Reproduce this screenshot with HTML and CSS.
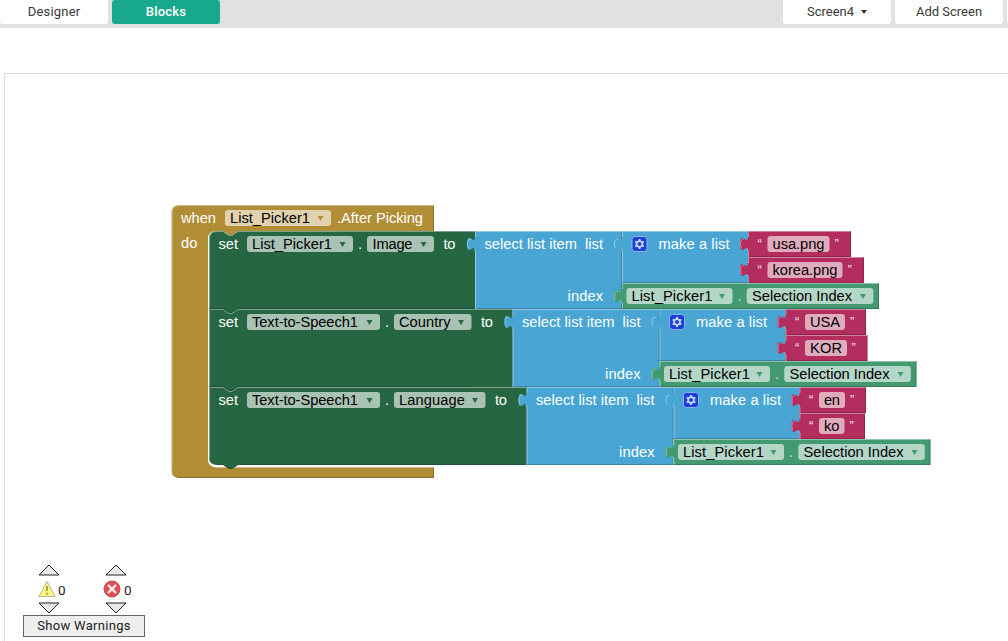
FILE: index.html
```html
<!DOCTYPE html>
<html lang="en">
<head>
<meta charset="utf-8">
<title>Blocks</title>
<link rel="stylesheet" href="styles.css">
</head>
<body>
<header class="toolbar">
  <nav class="group">
    <button class="tab">Designer</button>
    <button class="tab active">Blocks</button>
  </nav>
  <nav class="group screens">
    <button class="tab tight">Screen4<span class="caret"></span></button>
    <button class="tab tight">Add Screen</button>
    <button class="tab"></button>
  </nav>
</header>
<main class="workspace">
<svg class="canvas" viewBox="5 74 1003 567" width="1003" height="567">
  <defs>
    <path id="tab" d="M1.500 6H0c0 9-8-7-8 7s8-2 8 7h1.500z"/>
    <path id="tab-light" d="M-4 8.200q-3.500-.5-3.500 4.800q0 3 1 4.500M-1 17.500q1 1 1 2.500"/>
    <path id="arrow" d="M-3-2h6l-3 5z"/>
    <g id="gear">
      <rect class="gear-box" x="-7.500" y="-7.500" width="15" height="15" rx="3"/>
      <path class="gear-teeth" d="M0-5v10M-4.330-2.500l8.660 5M-4.330 2.500l8.660-5"/>
      <circle class="gear-ring" r="2.900"/>
    </g>
    <g id="getter">
      <path class="getter" d="M0 0h257v26h-257z"/>
      <path class="lite" d="M.5 25v-24.500h256"/><path class="shade" d="M1 25.500h255.500v-25"/>
      <use href="#tab" class="getter"/><use href="#tab-light" class="lite"/>
      <rect class="field" x="4.500" y="5" width="106" height="16" rx="3"/>
      <rect class="field" x="124.800" y="5" width="126.500" height="16" rx="3"/>
      <text class="dark" x="9.500" y="18" textLength="81">List_Picker1</text>
      <use href="#arrow" class="getter" x="100" y="13"/>
      <text class="dot" x="115.500" y="18">.</text>
      <text class="dark" x="130" y="18" textLength="100">Selection Index</text>
      <use href="#arrow" class="getter" x="241" y="13"/>
    </g>
    <g id="select">
      <path class="list" d="M0 0h274v52h-127v26h-147z"/>
      <path class="lite" d="M.5 78v-77.500h273M147.500 1v50"/>
      <path class="shade" d="M1 77.500h146M146.500 77v-76M148 51.500h125"/>
      <use href="#tab" class="list"/><use href="#tab-light" class="lite"/>
      <use href="#tab" class="list" x="147"/><use href="#tab-light" class="lite" x="147"/>
      <text x="9.500" y="18" textLength="92.500">select list item</text>
      <text x="110" y="18" textLength="18">list</text>
      <text x="92.500" y="70" textLength="35.500">index</text>
      <use href="#gear" x="164.500" y="13"/>
      <text x="183.500" y="18" textLength="71">make a list</text>
      <use href="#getter" x="147" y="52"/>
    </g>
    <g id="notch"><path class="shade" d="M0-.5h14l6 4h3l6-4h236"/><path class="lite" d="M0 .5h14l6 4h3l6-4h237"/></g>
    <g id="string-plugs">
      <use href="#tab" class="string" x="273"/><use href="#tab" class="string" x="273" y="26"/>
      <use href="#tab-light" class="lite" x="273"/><use href="#tab-light" class="lite" x="273" y="26"/>
      <text class="quote" x="282.500" y="17">“</text><text class="quote" x="282.500" y="43">“</text>
    </g>
  </defs>

  <g class="event">
    <path class="gold" d="M171.500 213q0-8 8-8h254.500v26h-196l-6 4h-3l-6-4h-7q-8 0-8 8v220q0 8 8 8h218v11h-254.500q-8 0-8-8z"/>
    <path class="lite" d="M172 470v-257q0-7.500 7.500-7.500h254M211 465q2 2.500 6 2.500h217"/>
    <path class="shade" d="M175 476q2 1.500 5 1.500h253.500v-10M433.500 206v25"/>
    <text x="181" y="223" textLength="35">when</text>
    <rect class="field" x="225" y="210" width="106" height="16" rx="3"/>
    <text class="dark" x="230" y="223" textLength="80">List_Picker1</text><use href="#arrow" class="gold" x="320.500" y="218"/>
    <text x="337" y="223" textLength="86">.After Picking</text>
    <text x="181" y="248" textLength="16.500">do</text>
  </g>

  <g transform="translate(209 231)">
    <path class="setter" d="M0 8q0-8 8-8h6l6 4h3l6-4h238v78h-267z"/>
    <path class="lite" d="M.5 78v-70q0-7.500 7.500-7.500h6l6 4h3l6-4h237"/>
    <text x="9.500" y="18" textLength="19.500">set</text>
    <rect class="field" x="38" y="5" width="106" height="16" rx="3"/>
    <text class="dark" x="43" y="18" textLength="80">List_Picker1</text><use href="#arrow" class="setter" x="133.500" y="13"/>
    <text x="149" y="18">.</text>
    <rect class="field" x="158" y="5" width="67" height="16" rx="3"/>
    <text class="dark" x="163.500" y="18" textLength="40">Image</text><use href="#arrow" class="setter" x="214.500" y="13"/>
    <text x="234.500" y="18" textLength="12">to</text>
  </g>
  <g transform="translate(475 231)">
    <use href="#select"/>
    <path class="string" d="M273 0h103v26h-103zM273 26h116v26h-116z"/>
    <path class="lite" d="M273.500 26v-25.500h102M273.500 52v-25.500h115"/><path class="shade" d="M274 25.500h101.500v-25M274 51.500h114.500v-25"/>
    <use href="#string-plugs"/>
    <rect class="field" x="292.500" y="5" width="62" height="16" rx="3"/>
    <text class="dark" x="297.500" y="18" textLength="52">usa.png</text><text class="quote" x="359.500" y="17">”</text>
    <rect class="field" x="292.500" y="31" width="75" height="16" rx="3"/>
    <text class="dark" x="297.500" y="44" textLength="65">korea.png</text><text class="quote" x="372.500" y="43">”</text>
  </g>

  <g transform="translate(209 309)">
    <path class="setter" d="M0 0h304v78h-304z"/><path class="lite" d="M.5 78v-77M266 .5h38"/>
    <use href="#notch"/>
    <text x="9.500" y="18" textLength="19.500">set</text>
    <rect class="field" x="38" y="5" width="133" height="16" rx="3"/>
    <text class="dark" x="43" y="18" textLength="106">Text-to-Speech1</text><use href="#arrow" class="setter" x="160.500" y="13"/>
    <text x="176" y="18">.</text>
    <rect class="field" x="185" y="5" width="77.500" height="16" rx="3"/>
    <text class="dark" x="190" y="18" textLength="51.500">Country</text><use href="#arrow" class="setter" x="252" y="13"/>
    <text x="272" y="18" textLength="12">to</text>
  </g>
  <g transform="translate(512.500 309)">
    <use href="#select"/>
    <path class="string" d="M273 0h80.500v26h-80.500zM273 26h82v26h-82z"/>
    <path class="lite" d="M273.500 26v-25.500h79.500M273.500 52v-25.500h81"/><path class="shade" d="M274 25.500h79v-25M274 51.500h80.500v-25"/>
    <use href="#string-plugs"/>
    <rect class="field" x="292.500" y="5" width="40" height="16" rx="3"/>
    <text class="dark" x="297.500" y="18" textLength="30">USA</text><text class="quote" x="337.500" y="17">”</text>
    <rect class="field" x="292.500" y="31" width="42" height="16" rx="3"/>
    <text class="dark" x="297.500" y="44" textLength="32">KOR</text><text class="quote" x="339" y="43">”</text>
  </g>

  <g transform="translate(209 387)">
    <path class="setter" d="M0 0h318v78h-289l-6 4h-3l-6-4h-6q-8 0-8-8z"/><path class="lite" d="M.5 71v-70M266 .5h51"/>
    <use href="#notch"/><path class="shade" d="M8 77.500h6l6 4h3l6-4h288"/>
    <text x="9.500" y="18" textLength="19.500">set</text>
    <rect class="field" x="38" y="5" width="133" height="16" rx="3"/>
    <text class="dark" x="43" y="18" textLength="106">Text-to-Speech1</text><use href="#arrow" class="setter" x="160.500" y="13"/>
    <text x="176" y="18">.</text>
    <rect class="field" x="185" y="5" width="91.500" height="16" rx="3"/>
    <text class="dark" x="190" y="18" textLength="66">Language</text><use href="#arrow" class="setter" x="266" y="13"/>
    <text x="286" y="18" textLength="12">to</text>
  </g>
  <g transform="translate(526.500 387)">
    <use href="#select"/>
    <path class="string" d="M273 0h66.500v26h-66.500zM273 26h65.500v26h-65.500z"/>
    <path class="lite" d="M273.500 26v-25.500h65.500M273.500 52v-25.500h64.500"/><path class="shade" d="M274 25.500h65v-25M274 51.500h64v-25"/>
    <use href="#string-plugs"/>
    <rect class="field" x="292.500" y="5" width="26" height="16" rx="3"/>
    <text class="dark" x="297.500" y="18" textLength="16">en</text><text class="quote" x="323.500" y="17">”</text>
    <rect class="field" x="292.500" y="31" width="25.500" height="16" rx="3"/>
    <text class="dark" x="297.500" y="44" textLength="15.500">ko</text><text class="quote" x="323" y="43">”</text>
  </g>
</svg>
<section class="warnings">
  <div class="counters">
    <div class="counter">
      <svg class="step" viewBox="0 0 22 12"><path d="M1 11L11 1L21 11z"/></svg>
      <div class="count"><svg class="icon" viewBox="0 0 18 18"><path d="M9 1.500L17 16.500H1z" fill="#fbf982" stroke="#b7b49a" stroke-linejoin="round"/><path d="M9 6v5M9 12.800v2" stroke="#9a9437" stroke-width="1.700"/></svg><span>0</span></div>
      <svg class="step" viewBox="0 0 22 12"><path d="M1 1L11 11L21 1z"/></svg>
    </div>
    <div class="counter errors">
      <svg class="step" viewBox="0 0 22 12"><path d="M1 11L11 1L21 11z"/></svg>
      <div class="count"><svg class="icon" viewBox="0 0 18 18"><circle cx="9" cy="9" r="8" fill="#e94b50" stroke="#a45a5c"/><path d="M5 5l8 8M13 5l-8 8" stroke="#fff" stroke-width="2.200"/></svg><span>0</span></div>
      <svg class="step" viewBox="0 0 22 12"><path d="M1 1L11 11L21 1z"/></svg>
    </div>
  </div>
  <button class="show">Show Warnings</button>
</section>
</main>
</body>
</html>
```
FILE: styles.css
```css
* { box-sizing: border-box; }
body { margin: 0; height: 641px; overflow: hidden; background: #fff; font-family: Roboto, sans-serif; }
.toolbar { display: flex; justify-content: space-between; height: 28px; background: #e2e0e0; overflow: hidden; }
.group { display: flex; gap: 4px; }
.screens { margin-right: -107px; }
.tab {
  width: 108px; height: 24px; flex: none; border: 0; border-radius: 0 0 3px 3px; padding: 0;
  background: #fff; color: #393939; font: 13px/24px Roboto, sans-serif; letter-spacing: .2px;
}
.tab.tight { letter-spacing: 0; }
.tab.active { background: #18a98c; color: #fff; font-weight: 500; border-radius: 3px; }
.caret { display: inline-block; margin: 0 0 2px 7px; border: 3px solid transparent; border-top: 4px solid #333; border-bottom: 0; }
.workspace { position: relative; margin: 45px 0 0 4px; height: 568px; border: solid #dcdcdc; border-width: 1px 0 0 1px; }
.canvas { display: block; }
.canvas text { fill: #fff; font: 14.667px "Liberation Sans", Arial, sans-serif; }
.canvas text.dark { fill: #000; }
.canvas text.dot { fill-opacity: .7; }
.canvas text.quote { font-size: 13px; fill-opacity: .9; }
.gold { fill: #b18e35; }
.setter { fill: #266643; }
.list { fill: #49a6d4; }
.string { fill: #b32d5e; }
.getter { fill: #439970; }
.field { fill: #fff; fill-opacity: .6; }
.lite { fill: none; stroke: #fff; stroke-opacity: .4; }
.shade { fill: none; stroke: #000; stroke-opacity: .2; }
.gear-box { fill: #1c3fda; stroke: #8ab4f0; }
.gear-teeth { stroke: #c5d5fb; stroke-width: 2; }
.gear-ring { fill: #1c3fda; stroke: #c5d5fb; stroke-width: 1.800; }
.warnings { position: absolute; left: 18px; bottom: 4px; width: 122px; }
.counters { display: flex; gap: 37px; padding-left: 11px; }
.counter { width: 30px; }
.step { display: block; width: 22px; height: 12px; margin-left: 4px; fill: #e9e9e9; stroke: #222; stroke-width: 1; }
.count { display: flex; align-items: center; gap: 2px; height: 26px; margin-left: 4px; font-size: 13.500px; color: #222; }
.count span { padding-top: 2px; }
.errors .count { margin-left: 2px; gap: 3px; }
.icon { width: 18px; height: 18px; flex: none; fill: none; }
.show { display: block; width: 122px; height: 22px; margin-top: 1px; padding: 0; border: 1.500px solid #666; background: #efefef; color: #222; font: 13px/20px Roboto, sans-serif; letter-spacing: .3px; }
```
